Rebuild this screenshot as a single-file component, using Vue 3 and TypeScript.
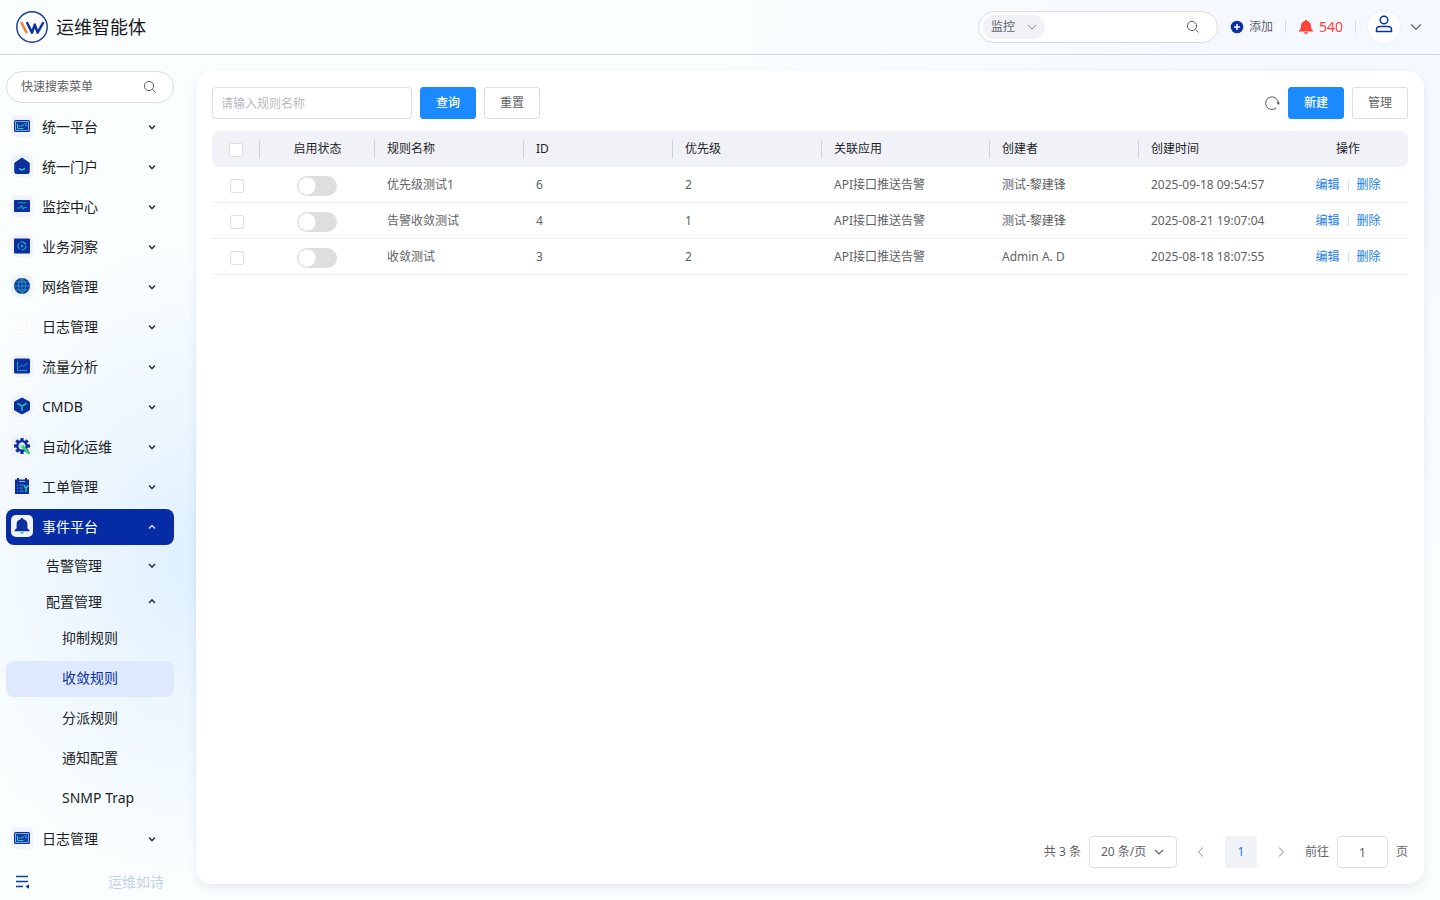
<script setup lang="ts">
import { ref } from 'vue'

interface Leaf { label: string; active?: boolean }
interface Group { label: string; open: boolean; children: Leaf[] }
interface MenuItem { label: string; icon: string; open?: boolean; groups?: Group[] }
interface Rule { name: string; id: number; priority: number; app: string; creator: string; created: string }

const menu: MenuItem[] = [
  { label: '统一平台', icon: 'screen' },
  { label: '统一门户', icon: 'home' },
  { label: '监控中心', icon: 'monitor' },
  { label: '业务洞察', icon: 'insight' },
  { label: '网络管理', icon: 'globe' },
  { label: '日志管理', icon: 'faint' },
  { label: '流量分析', icon: 'chart' },
  { label: 'CMDB', icon: 'cube' },
  { label: '自动化运维', icon: 'gear' },
  { label: '工单管理', icon: 'ticket' },
  {
    label: '事件平台',
    icon: 'bell',
    open: true,
    groups: [
      { label: '告警管理', open: false, children: [] },
      {
        label: '配置管理',
        open: true,
        children: [
          { label: '抑制规则' },
          { label: '收敛规则', active: true },
          { label: '分派规则' },
          { label: '通知配置' },
          { label: 'SNMP Trap' },
        ],
      },
    ],
  },
  { label: '日志管理', icon: 'screen' },
]

const rules: Rule[] = [
  { name: '优先级测试1', id: 6, priority: 2, app: 'API接口推送告警', creator: '测试-黎建锋', created: '2025-09-18 09:54:57' },
  { name: '告警收敛测试', id: 4, priority: 1, app: 'API接口推送告警', creator: '测试-黎建锋', created: '2025-08-21 19:07:04' },
  { name: '收敛测试', id: 3, priority: 2, app: 'API接口推送告警', creator: 'Admin A. D', created: '2025-08-18 18:07:55' },
]

const keyword = ref('')
const page = ref('1')
const gearTeeth = [0, 45, 90, 135, 180, 225, 270, 315]
</script>

<template>
  <div class="app">
    <header class="topbar">
      <svg class="logo" viewBox="0 0 32 32" aria-hidden="true">
        <circle cx="16" cy="16" r="15.2" fill="#fff" stroke="#123a96" stroke-width="1.4" />
        <path d="M5.6 12 10.4 21.2" stroke="#f58232" stroke-width="2.6" stroke-linecap="round" fill="none" />
        <path d="M11.2 12 16 21.6 18.8 13.6 21.6 21.6 27 12" stroke="#0a33a0" stroke-width="2.5" stroke-linecap="round" stroke-linejoin="round" fill="none" />
      </svg>
      <h1 class="brand">运维智能体</h1>
      <div class="global-search">
        <button class="scope" type="button">
          监控
          <svg viewBox="0 0 10 10" class="i10"><path d="M1 3 5 7.2 9 3" fill="none" stroke="#8b8f98" /></svg>
        </button>
        <input type="text" aria-label="全局搜索" />
        <svg class="i14" viewBox="0 0 14 14"><circle cx="6" cy="6" r="4.6" /><path d="m9.4 9.4 3.2 3.2" /></svg>
      </div>
      <button class="add" type="button">
        <svg class="i14" viewBox="0 0 14 14"><circle cx="7" cy="7" r="6.3" fill="#0b31a0" /><path d="M7 4v6M4 7h6" stroke="#fff" stroke-width="1.5" /></svg>
        添加
      </button>
      <i class="divider"></i>
      <button class="alarm" type="button">
        <svg class="i16" viewBox="0 0 16 16" fill="#ff4238"><path d="M8 1c.8 0 1.2.5 1.3 1.1 2.4.6 3.6 2.3 3.6 4.500 0 2.800.8 4 2.100 5.100v.9H1v-.9c1.300-1.100 2.100-2.300 2.100-5.100 0-2.200 1.200-3.900 3.600-4.500C6.800 1.500 7.200 1 8 1ZM5.800 13.300h4.400C9.900 14.500 9 15 8 15s-1.900-.5-2.200-1.700Z" /></svg>
        540
      </button>
      <i class="divider"></i>
      <button class="avatar" type="button" aria-label="用户">
        <svg viewBox="0 0 18 18" class="i18"><circle cx="9" cy="5" r="3.8" /><path d="M1.500 16.500v-1.800c0-1.900 1.500-3.100 3.400-3.100h8.200c1.900 0 3.400 1.200 3.400 3.100v1.800Z" /></svg>
      </button>
      <button class="more" type="button" aria-label="更多">
        <svg class="i12" viewBox="0 0 12 12"><path d="m1.200 3.400 4.800 5 4.800-5" /></svg>
      </button>
    </header>

    <div class="body">
      <aside class="sidebar">
        <label class="menu-search">
          <input type="text" placeholder="快速搜索菜单" aria-label="快速搜索菜单" />
          <svg class="i14" viewBox="0 0 14 14"><circle cx="6" cy="6" r="4.6" /><path d="m9.4 9.4 3.2 3.2" /></svg>
        </label>
        <nav>
          <ul class="menu">
            <li v-for="(item, i) in menu" :key="i">
              <button type="button" class="item" :class="{ open: item.open }">
                <span class="badge" :class="{ pale: item.icon === 'faint' }">
                  <svg class="i18" viewBox="0 0 18 18">
                    <template v-if="item.icon === 'screen'">
                      <rect x="1" y="3" width="16" height="12" rx="1.5" fill="#0b2f9f" />
                      <rect x="2.5" y="4.5" width="13" height="9" fill="#0c3a9f" stroke="#9cc4ee" stroke-width=".8" />
                      <path d="M4.500 6.500v5h6M5.500 10l2-2 1.500 1.500 2.500-3M13 6v3.500" fill="none" stroke="#27c8b4" />
                    </template>
                    <template v-else-if="item.icon === 'home'">
                      <path d="M9 1 16.200 6v9q0 1.500-1.500 1.500H3.300q-1.500 0-1.500-1.500V6Z" fill="#0b2f9f" stroke="#0b2f9f" stroke-linejoin="round" />
                      <path d="M6 11.500q3 2.600 6 0" fill="none" stroke="#22d3a8" stroke-width="1.5" />
                    </template>
                    <template v-else-if="item.icon === 'monitor'">
                      <rect x="1" y="3" width="16" height="12" rx="1" fill="#0b2f9f" />
                      <path d="M5 5.800h8M4 11h3l1.500-2.500L10 12l1-1.500h3" fill="none" stroke="#209bb8" stroke-width="1.1" />
                    </template>
                    <template v-else-if="item.icon === 'insight'">
                      <rect x="1" y="1.5" width="16" height="15" rx="1" fill="#0b2f9f" />
                      <circle cx="9" cy="9" r="4" fill="none" stroke="#25a9bd" stroke-width="1.2" stroke-dasharray="6.6 1.8" />
                      <circle cx="9" cy="9" r="1.3" fill="#25a9bd" />
                    </template>
                    <template v-else-if="item.icon === 'globe'">
                      <circle cx="9" cy="9" r="8" fill="#0b3fa0" />
                      <path d="M1 9h16M2.500 5h13M2.500 13h13M9 1v16M9 1Q1.500 9 9 17M9 1q7.500 8 0 16" fill="none" stroke="#2fa0c0" stroke-width=".8" />
                    </template>
                    <template v-else-if="item.icon === 'faint'">
                      <rect x="2" y="3" width="14" height="12" rx="1" fill="none" stroke="#fff" stroke-width="2" />
                      <path d="M5 8h8M5 11h8" stroke="#fff" />
                    </template>
                    <template v-else-if="item.icon === 'chart'">
                      <rect x="1" y="1.5" width="16" height="15" rx="1.5" fill="#0b2f9f" />
                      <path d="M4.500 4.500v9h9.500M6 10.500 8.500 8l2 1.500L14 6" fill="none" stroke="#2495c6" />
                    </template>
                    <template v-else-if="item.icon === 'cube'">
                      <path d="m9 1 7.500 4v8L9 17l-7.500-4V5Z" fill="#0b2f9f" stroke="#0b2f9f" stroke-linejoin="round" />
                      <path d="M4.500 6.500 9 9l4.500-2.500M9 9v5" fill="none" stroke="#22c5b5" stroke-width="1.5" />
                    </template>
                    <template v-else-if="item.icon === 'gear'">
                      <rect v-for="a in gearTeeth" :key="a" x="7.4" y="1" width="3.2" height="4" fill="#0b2f9f" :transform="`rotate(${a} 9 9)`" />
                      <circle cx="9" cy="9" r="4.7" fill="#eef0fb" stroke="#0b2f9f" stroke-width="2.4" />
                      <circle cx="9" cy="9" r="2.8" fill="#9fe6bd" />
                      <path d="M7.200 5.800 9 8.500l1.800-2.700Z" fill="#fff" />
                      <path d="m10 10 5.800 6" stroke="#35d078" stroke-width="2.6" stroke-linecap="round" />
                    </template>
                    <template v-else-if="item.icon === 'ticket'">
                      <path d="M2 2.500h2V1h2v1.500h6V1h2v1.500h2V17H2Z" fill="#0b2f9f" />
                      <path d="M6 4.500h6" stroke="#8bb6e8" />
                      <path d="M4 8h1M6.500 8h4M4 11h1M6.500 11h3M4 14h1M6.500 14h4" stroke="#31a7c8" stroke-width="1.2" />
                      <path d="M11.500 8v1.500l1.500 1.500 1.500-1.500V8M13 11v4" fill="none" stroke="#22d3a8" stroke-width="1.4" />
                    </template>
                    <template v-else>
                      <path d="M9 1c.9 0 1.300.6 1.400 1.200 2.700.6 4 2.400 4 4.800v4.200l2.100 2v1h-15v-1l2.100-2V7c0-2.400 1.300-4.200 4-4.800C7.700 1.600 8.100 1 9 1Z" fill="#0b2f9f" />
                      <path d="M7.300 15h3.400Q10.400 17 9 17t-1.700-2Z" fill="#22d3a8" />
                    </template>
                  </svg>
                </span>
                <span class="text">{{ item.label }}</span>
                <svg class="i12 arrow" viewBox="0 0 12 12"><path :d="item.open ? 'm3 7.500 3-3 3 3' : 'm3 4.500 3 3 3-3'" /></svg>
              </button>
              <ul v-if="item.groups" class="groups">
                <li v-for="g in item.groups" :key="g.label">
                  <button type="button" class="group">
                    <span class="text">{{ g.label }}</span>
                    <svg class="i12 arrow" viewBox="0 0 12 12"><path :d="g.open ? 'm3 7 3-3 3 3' : 'm3 4 3 3 3-3'" /></svg>
                  </button>
                  <ul v-if="g.open">
                    <li v-for="l in g.children" :key="l.label">
                      <a href="#" class="leaf" :class="{ active: l.active }">{{ l.label }}</a>
                    </li>
                  </ul>
                </li>
              </ul>
            </li>
          </ul>
        </nav>
        <div class="side-foot">
          <button type="button" aria-label="收起菜单">
            <svg class="i14" viewBox="0 0 14 14"><path d="M1 1.500h12M1 6.500h12M1 11.500h7" fill="none" stroke="#0b3aa5" stroke-width="1.4" /><path d="M14 9.200v4.600l-3.600-2.300Z" fill="#0b3aa5" /></svg>
          </button>
          <span>运维如诗</span>
        </div>
      </aside>

      <main class="card">
        <form class="toolbar" @submit.prevent>
          <input v-model="keyword" class="field name" type="text" placeholder="请输入规则名称" aria-label="规则名称" />
          <button class="btn primary" type="submit">查询</button>
          <button class="btn" type="reset">重置</button>
          <button class="refresh" type="button" aria-label="刷新">
            <svg class="i16" viewBox="0 0 16 16"><path d="M12.200 12.900A6.300 6.300 0 1 1 14.300 8" /><path d="M12.400 7.400h3.600L14.300 10Z" fill="#55585e" stroke="none" /></svg>
          </button>
          <button class="btn primary" type="button">新建</button>
          <button class="btn" type="button">管理</button>
        </form>

        <table>
          <colgroup>
            <col class="c-check" /><col class="c-state" /><col class="c-mid" /><col class="c-mid" /><col class="c-mid" />
            <col class="c-app" /><col class="c-mid" /><col class="c-mid" /><col class="c-ops" />
          </colgroup>
          <thead>
            <tr>
              <th class="center"><input type="checkbox" class="tick" aria-label="全选" /></th>
              <th class="center">启用状态</th>
              <th>规则名称</th>
              <th>ID</th>
              <th>优先级</th>
              <th>关联应用</th>
              <th>创建者</th>
              <th class="plain">创建时间</th>
              <th class="center plain">操作</th>
            </tr>
          </thead>
          <tbody>
            <tr v-for="r in rules" :key="r.id">
              <td class="center pick"><input type="checkbox" class="tick" :aria-label="'选择' + r.name" /></td>
              <td class="center state"><input type="checkbox" role="switch" class="switch" :aria-label="'启用' + r.name" /></td>
              <td>{{ r.name }}</td>
              <td>{{ r.id }}</td>
              <td>{{ r.priority }}</td>
              <td>{{ r.app }}</td>
              <td>{{ r.creator }}</td>
              <td>{{ r.created }}</td>
              <td>
                <div class="ops"><a href="#">编辑</a><i></i><a href="#">删除</a></div>
              </td>
            </tr>
          </tbody>
        </table>

        <footer class="pager">
          <span>共 3 条</span>
          <div class="size">
            <select class="field" aria-label="每页条数"><option>20 条/页</option></select>
            <svg class="i10" viewBox="0 0 10 10"><path d="M1 3 5 7l4-4" fill="none" stroke="#606266" stroke-width="1.2" /></svg>
          </div>
          <button type="button" aria-label="上一页"><svg class="i12" viewBox="0 0 12 12"><path d="M8 1.500 3.500 6 8 10.500" /></svg></button>
          <button type="button" class="current">1</button>
          <button type="button" aria-label="下一页"><svg class="i12" viewBox="0 0 12 12"><path d="M4 1.500 8.500 6 4 10.500" /></svg></button>
          <label for="goto">前往</label>
          <input id="goto" v-model="page" class="field goto" type="text" />
          <span>页</span>
        </footer>
      </main>
    </div>
  </div>
</template>

<style>
body {
  background: #fbfeff;
}
</style>

<style scoped>
.app,
.app * {
  box-sizing: border-box;
}
.app {
  display: flex;
  flex-direction: column;
  min-height: 100vh;
  font-family: 'Noto Sans', 'Noto Sans CJK SC', sans-serif;
  font-size: 12px;
  line-height: 20px;
  color: #606266;
  background:
    radial-gradient(ellipse 280px 320px at 200px 560px, rgba(222, 239, 255, 0.95), rgba(222, 239, 255, 0) 100%),
    radial-gradient(ellipse 600px 500px at 1320px 80px, rgba(243, 247, 255, 0.9), rgba(243, 247, 255, 0) 100%),
    #fbfeff;
}
button,
input,
select {
  font: inherit;
  color: inherit;
  margin: 0;
}
button {
  border: 0;
  padding: 0;
  background: none;
  cursor: pointer;
}
input,
select {
  outline: none;
}
ul {
  list-style: none;
  margin: 0;
  padding: 0;
}
a {
  text-decoration: none;
}
svg {
  display: block;
  flex: none;
}
.i10 { width: 10px; height: 10px; }
.i12 { width: 12px; height: 12px; }
.i14 { width: 14px; height: 14px; }
.i16 { width: 16px; height: 16px; }
.i18 { width: 18px; height: 18px; }

.topbar {
  display: flex;
  align-items: center;
  height: 55px;
  padding: 0 18px 0 16px;
  border-bottom: 1px solid #d0d5e0;
}
.logo {
  width: 32px;
  height: 32px;
}
.brand {
  margin: 0 auto 0 8px;
  font-size: 18px;
  line-height: 28px;
  font-weight: 400;
  color: #17181c;
}
.global-search {
  display: flex;
  align-items: center;
  width: 240px;
  height: 32px;
  padding: 0 17px 0 4px;
  border: 1px solid #dcdde2;
  border-radius: 16px;
  background: #fff;
}
.global-search input {
  flex: 1;
  min-width: 0;
  border: 0;
  background: none;
}
.global-search > svg,
.menu-search svg {
  fill: none;
  stroke: #606266;
}
.scope {
  display: flex;
  align-items: center;
  justify-content: space-between;
  width: 62px;
  height: 24px;
  padding: 0 8px;
  border-radius: 12px;
  background: #f1f1f7;
}
.add {
  display: flex;
  align-items: center;
  gap: 5px;
  margin-left: 12px;
}
.divider {
  width: 1px;
  height: 12px;
  margin: 0 12px;
  background: #d5d8de;
}
.alarm {
  display: flex;
  align-items: center;
  gap: 5px;
  font-size: 14px;
  color: #ff4238;
}
.avatar {
  display: flex;
  justify-content: center;
  width: 32px;
  height: 32px;
  padding-top: 4px;
  border-radius: 50%;
  background: #fff;
  box-shadow: 0 0 4px rgba(30, 60, 120, 0.06);
}
.avatar svg {
  fill: none;
  stroke: #0b31a0;
  stroke-width: 1.5;
}
.more {
  margin-left: 10px;
}
.more svg {
  fill: none;
  stroke: #55585e;
  stroke-width: 1.3;
}

.body {
  display: flex;
  flex: 1;
}
.sidebar {
  display: flex;
  flex-direction: column;
  flex: none;
  width: 180px;
  padding: 16px 6px 0;
}
.menu-search {
  display: flex;
  align-items: center;
  width: 168px;
  height: 32px;
  margin-bottom: 6px;
  padding: 0 16px 0 14px;
  border: 1px solid #dcdde2;
  border-radius: 16px;
  background: #fff;
}
.menu-search input {
  flex: 1;
  min-width: 0;
  padding: 0;
  border: 0;
  background: none;
}
.menu-search input::placeholder {
  color: #606266;
}
.menu {
  font-size: 14px;
  color: #1c1e24;
}
.item,
.group,
.leaf {
  display: flex;
  align-items: center;
  width: 168px;
  height: 36px;
  border-radius: 8px;
  text-align: left;
}
.item {
  gap: 9px;
  margin-bottom: 4px;
  padding: 0 16px 0 5px;
}
.item.open {
  background: #052ca5;
  color: #fff;
}
.badge {
  display: flex;
  align-items: center;
  justify-content: center;
  width: 22px;
  height: 22px;
  margin-bottom: 2px;
  border-radius: 5px;
  background: #f0f2fc;
}
.badge.pale {
  background: #f9fcff;
}
.text {
  flex: 1;
}
.arrow {
  fill: none;
  stroke: #33363d;
  stroke-width: 1.6;
}
.open .arrow {
  stroke: #dfe6fa;
  stroke-width: 1.3;
}
.group {
  padding: 0 16px 2px 40px;
}
.leaf {
  margin-bottom: 4px;
  padding: 0 0 2px 56px;
  color: inherit;
}
.leaf.active {
  background: #dfe9fd;
  color: #0b31a0;
}
.side-foot {
  display: flex;
  align-items: center;
  justify-content: space-between;
  height: 36px;
  margin-top: auto;
  padding: 0 10px 0 9px;
  font-size: 14px;
  color: #c3d1e8;
}

.card {
  display: flex;
  flex-direction: column;
  flex: 1;
  min-width: 0;
  margin: 16px;
  padding: 16px;
  border-radius: 16px;
  background: #fff;
  box-shadow: 0 4px 10px rgba(40, 70, 110, 0.1);
}
.toolbar {
  display: flex;
  align-items: center;
  gap: 8px;
  margin-bottom: 12px;
}
.field {
  height: 32px;
  border: 1px solid #dcdee2;
  border-radius: 4px;
  background: #fff;
}
.name {
  width: 200px;
  padding: 0 8px;
}
.name::placeholder {
  color: #b8babf;
}
.btn {
  width: 56px;
  height: 32px;
  border: 1px solid #dcdee2;
  border-radius: 3px;
  background: #fff;
}
.btn.primary {
  border-color: #1b89ff;
  background: #1b89ff;
  color: #fff;
  font-weight: 500;
}
.refresh {
  margin-left: auto;
}
.refresh svg {
  fill: none;
  stroke: #55585e;
}

table {
  width: 100%;
  table-layout: fixed;
  border-collapse: separate;
  border-spacing: 0;
}
.c-check { width: 48px; }
.c-state { width: 115px; }
.c-mid { width: 149px; }
.c-app { width: 168px; }
.c-ops { width: 120px; }
th,
td {
  height: 36px;
  padding: 0 12px;
  text-align: left;
  white-space: nowrap;
}
th {
  font-weight: 400;
  color: #1c1e24;
  background: linear-gradient(#cfd1d8, #cfd1d8) right center / 1px 18px no-repeat #f1f1f8;
}
th.plain {
  background: #f1f1f8;
}
th:first-child {
  border-radius: 8px 0 0 8px;
}
th:last-child {
  border-radius: 0 8px 8px 0;
}
td {
  border-bottom: 1px solid #ebedf1;
}
.center {
  padding: 0;
  text-align: center;
}
.pick {
  padding-left: 2px;
}
.state {
  padding-right: 2px;
}
.tick,
.switch {
  appearance: none;
  display: block;
  margin: 2px auto 0;
  background: #fff;
}
.tick {
  width: 14px;
  height: 14px;
  border: 1px solid #dcdee2;
  border-radius: 2px;
}
.tick:checked {
  background: #1b89ff;
}
.switch {
  width: 40px;
  height: 20px;
  border-radius: 10px;
  background: radial-gradient(circle at 10px 10px, #fff 8px, #dedede 9px);
}
.switch:checked {
  background: radial-gradient(circle at 30px 10px, #fff 8px, #1b89ff 9px);
}
.ops {
  display: flex;
  align-items: center;
  justify-content: center;
  gap: 8px;
}
.ops a {
  color: #1b80ea;
}
.ops i {
  width: 1px;
  height: 10px;
  background: #dcdee2;
}

.pager {
  display: flex;
  align-items: center;
  justify-content: flex-end;
  gap: 8px;
  margin-top: auto;
}
.pager button {
  display: flex;
  align-items: center;
  justify-content: center;
  width: 32px;
  height: 32px;
  border-radius: 3px;
}
.pager button svg {
  fill: none;
  stroke: #b5b8bf;
  stroke-width: 1.2;
}
.pager .current {
  background: #f1f1f8;
  color: #1b80ea;
}
.size {
  display: grid;
  align-items: center;
}
.size select,
.size svg {
  grid-area: 1 / 1;
}
.size select {
  appearance: none;
  width: 88px;
  padding: 0 11px;
}
.size svg {
  justify-self: end;
  margin-right: 13px;
  pointer-events: none;
}
.goto {
  width: 51px;
  padding: 0;
  text-align: center;
}
</style>
